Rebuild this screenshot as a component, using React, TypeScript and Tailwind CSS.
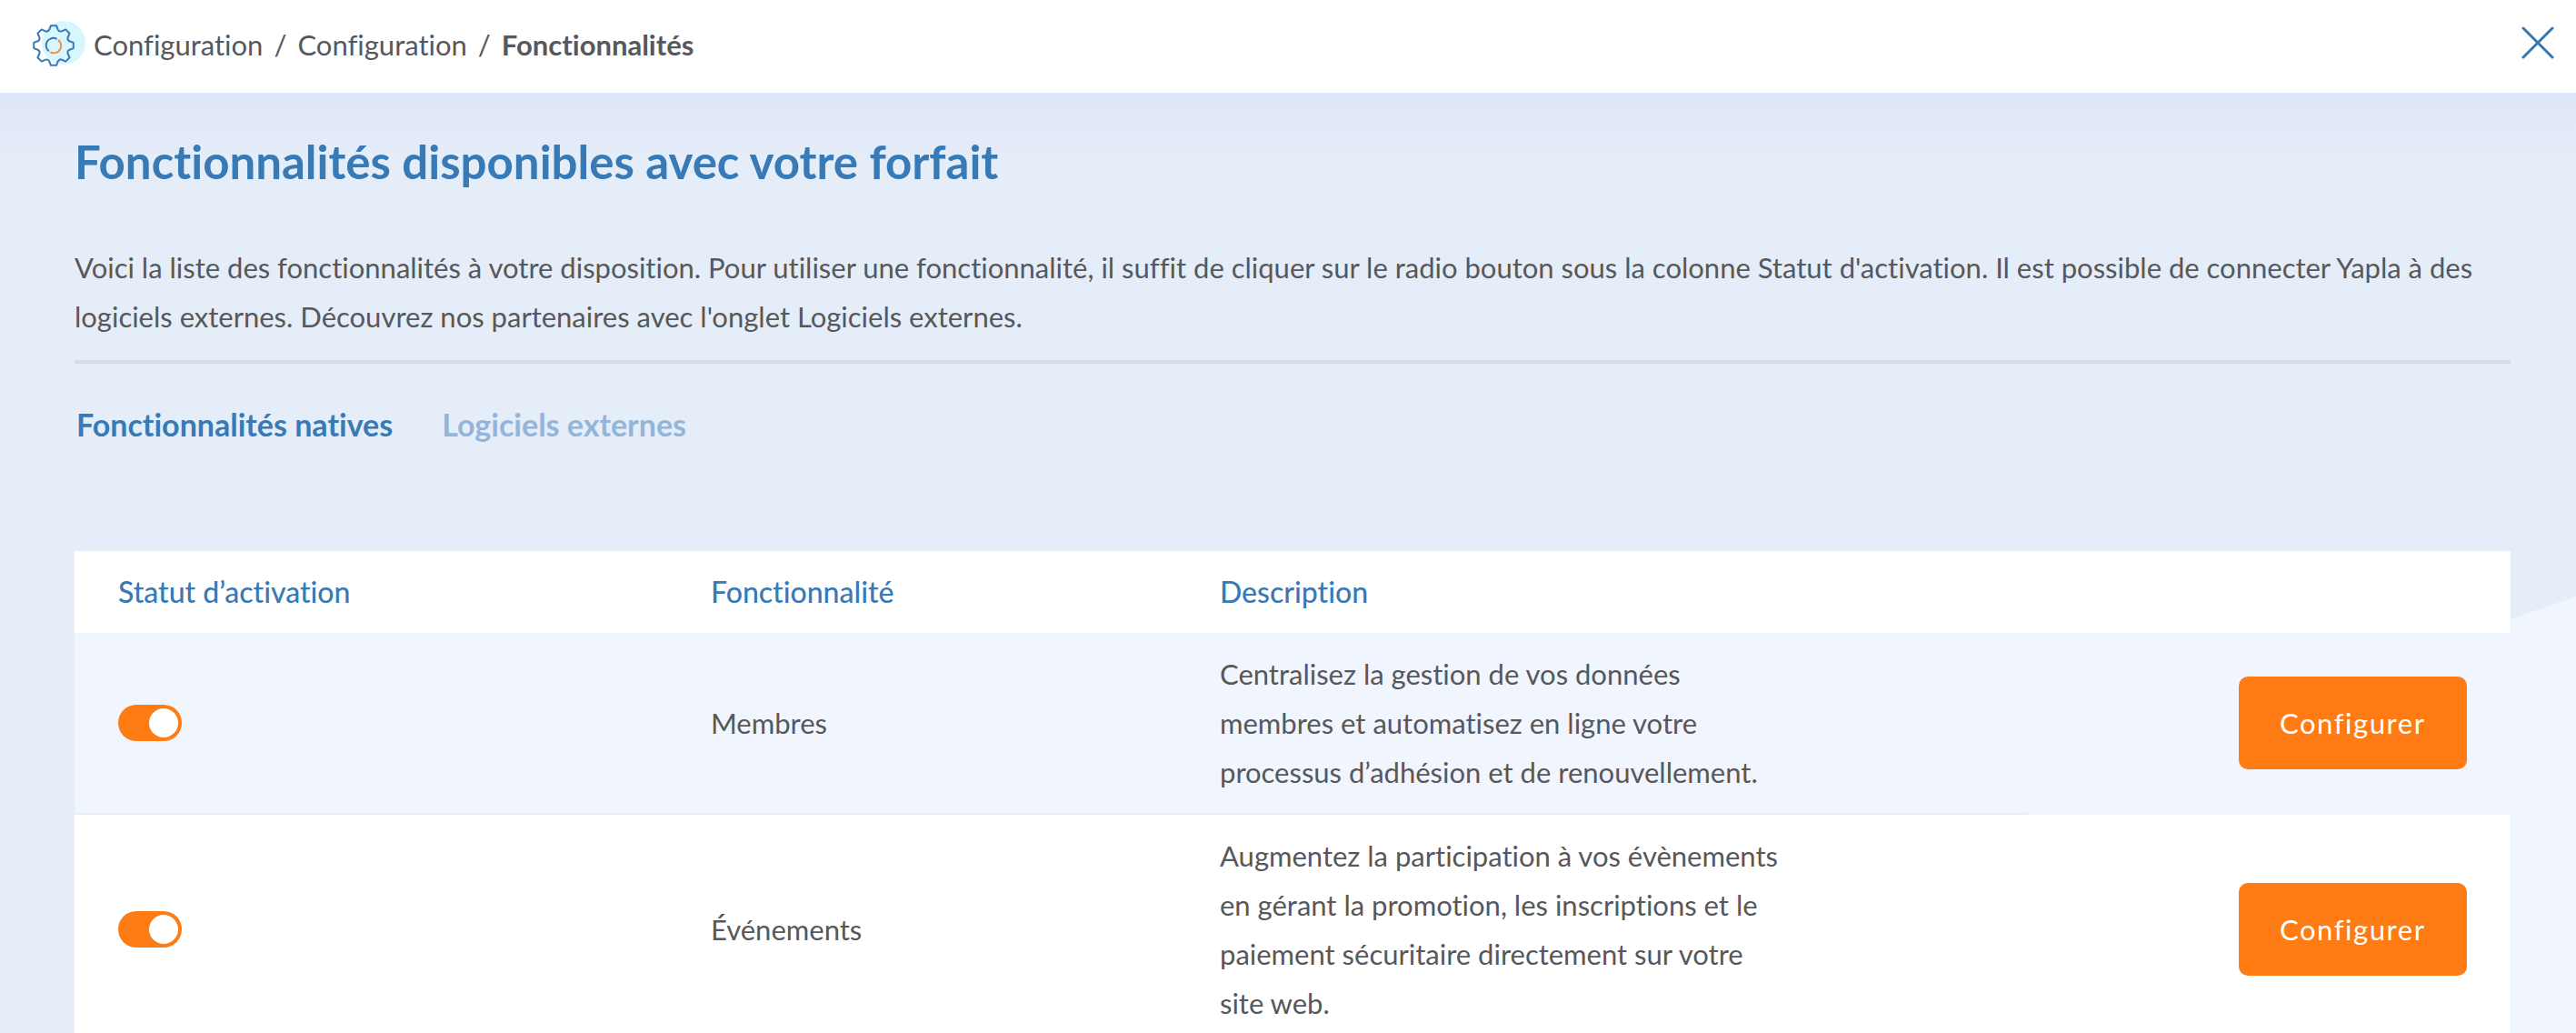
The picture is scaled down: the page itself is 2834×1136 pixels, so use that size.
const breadcrumbs = ["Configuration", "Configuration"];

const features = [
  {
    id: "membres",
    name: "Membres",
    description:
      "Centralisez la gestion de vos données membres et automatisez en ligne votre processus d’adhésion et de renouvellement.",
    rowClass: "bg-[#f1f5fe]",
  },
  {
    id: "evenements",
    name: "Événements",
    description:
      "Augmentez la participation à vos évènements en gérant la promotion, les inscriptions et le paiement sécuritaire directement sur votre site web.",
    rowClass: "bg-white",
  },
];

// Outline of an eight-toothed gear with rounded valleys between the teeth
function gearPath(cx: number, cy: number) {
  const point = (radius: number, degrees: number) => {
    const angle = (degrees * Math.PI) / 180;
    return `${(cx + radius * Math.sin(angle)).toFixed(1)} ${(cy - radius * Math.cos(angle)).toFixed(1)}`;
  };
  const teeth = Array.from({ length: 8 }, (_, tooth) => {
    const a = tooth * 45;
    return `${point(22, a - 8)}L${point(22, a + 8)}L${point(18, a + 15)}Q${point(16, a + 22)} ${point(18, a + 30)}`;
  });
  return `M${teeth.join("L")}Z`;
}

function GearIcon() {
  return (
    <svg viewBox="0 0 60 52" className="h-[52px] w-[60px] shrink-0" fill="none" aria-hidden="true">
      <circle cx="35" cy="24" r="24" fill="#d8f6fd" />
      <g strokeWidth="2" strokeLinecap="round" strokeLinejoin="round">
        <path stroke="#3a7ab5" d={gearPath(24, 27)} />
        <path stroke="#3a7ab5" d="M27 19.600a8 8 0 0 0-8.700 13.200" />
        <path stroke="#f08a3c" d="M29.700 21.500a8 8 0 0 1-8.500 13.200" />
      </g>
    </svg>
  );
}

function CloseIcon() {
  return (
    <svg viewBox="0 0 36 36" className="size-9" fill="none" stroke="#3574b1" strokeWidth="3" strokeLinecap="round" aria-hidden="true">
      <path d="M2 2l32 32M34 2L2 34" />
    </svg>
  );
}

function Header() {
  return (
    <header className="flex h-[102px] shrink-0 items-center justify-between bg-white pr-6 pl-[35px]">
      <nav aria-label="Fil d'Ariane" className="mb-1 flex items-center gap-2">
        <GearIcon />
        <ol className="flex items-center gap-3">
          {breadcrumbs.map((crumb, index) => (
            <li key={index} className="flex items-center gap-3">
              <a href="#configuration">{crumb}</a>
              <span aria-hidden="true">/</span>
            </li>
          ))}
          <li className="font-bold" aria-current="page">
            Fonctionnalités
          </li>
        </ol>
      </nav>
      <button type="button" aria-label="Fermer" className="mb-2">
        <CloseIcon />
      </button>
    </header>
  );
}

export default function App() {
  return (
    <div className="flex h-screen flex-col overflow-hidden bg-[#e5edf8] font-['Lato','Open_Sans',sans-serif] text-[31px] leading-[54px] text-[#56585b] [font-variant-ligatures:none]">
      <Header />

      <main className="relative min-h-0 flex-1 bg-[linear-gradient(#dbe7f8,#e1e7f9_20px,#e5edf8_72px)] pt-11 pr-[72px] pl-[82px]">
        {/* pale wave in the lower right corner of the page */}
        <svg viewBox="0 0 1000 480" className="absolute right-0 bottom-0 h-[480px] w-[1000px]" aria-hidden="true">
          <path fill="#f1f5fe" d="M1000 0C900 35 600 130 398 239S100 400 0 480H1000z" />
        </svg>

        <div className="relative">
          <h1 className="mb-[57px] text-[51px] leading-[64px] font-bold text-[#377ab5]">
            Fonctionnalités disponibles avec votre forfait
          </h1>
          <p>
            Voici la liste des fonctionnalités à votre disposition. Pour utiliser une fonctionnalité, il suffit de
            cliquer sur le radio bouton sous la colonne Statut d'activation. Il est possible de connecter Yapla à des
            logiciels externes. Découvrez nos partenaires avec l'onglet Logiciels externes.
          </p>
          <hr className="mt-[21px] border-t-4 border-[#d4dce7]" />

          <div role="tablist" className="mt-10 flex gap-[54px] pl-0.5 text-[34px] font-bold text-[#377ab5]">
            <button type="button" role="tab" aria-selected="true">
              Fonctionnalités natives
            </button>
            <button type="button" role="tab" aria-selected="false" className="text-[#93b5d9]">
              Logiciels externes
            </button>
          </div>

          <table className="mt-28 w-full table-fixed border-separate border-spacing-0 text-left">
            <thead className="bg-white text-[32px] text-[#377ab5]">
              <tr>
                <th scope="col" className="w-[652px] px-12 py-[18px] font-medium">
                  Statut d’activation
                </th>
                <th scope="col" className="w-[560px] px-12 font-medium">
                  Fonctionnalité
                </th>
                <th scope="col" className="px-12 font-medium">
                  Description
                </th>
                <td className="w-[347px]" />
              </tr>
            </thead>
            <tbody>
              {features.map(({ id, name, description, rowClass }) => (
                <tr key={id} className="*:border-b-2 *:border-transparent *:bg-clip-padding *:px-12 *:py-[18px]">
                  <td className={rowClass}>
                    <input
                      id={id}
                      type="checkbox"
                      defaultChecked
                      className="block h-10 w-[70px] cursor-pointer appearance-none rounded-full bg-gray-300 p-1 before:block before:size-8 before:rounded-full before:bg-white checked:bg-[#ff7c14] checked:before:ml-[30px]"
                    />
                  </td>
                  <td className={rowClass}>
                    <label htmlFor={id}>{name}</label>
                  </td>
                  <td className={rowClass}>
                    <p className="max-w-[625px]">{description}</p>
                  </td>
                  <td className={rowClass}>
                    <button
                      type="button"
                      className="block rounded-[10px] bg-[#ff7c14] px-[45px] py-6 tracking-wider text-white"
                    >
                      Configurer
                    </button>
                  </td>
                </tr>
              ))}
            </tbody>
          </table>
        </div>
      </main>
    </div>
  );
}
